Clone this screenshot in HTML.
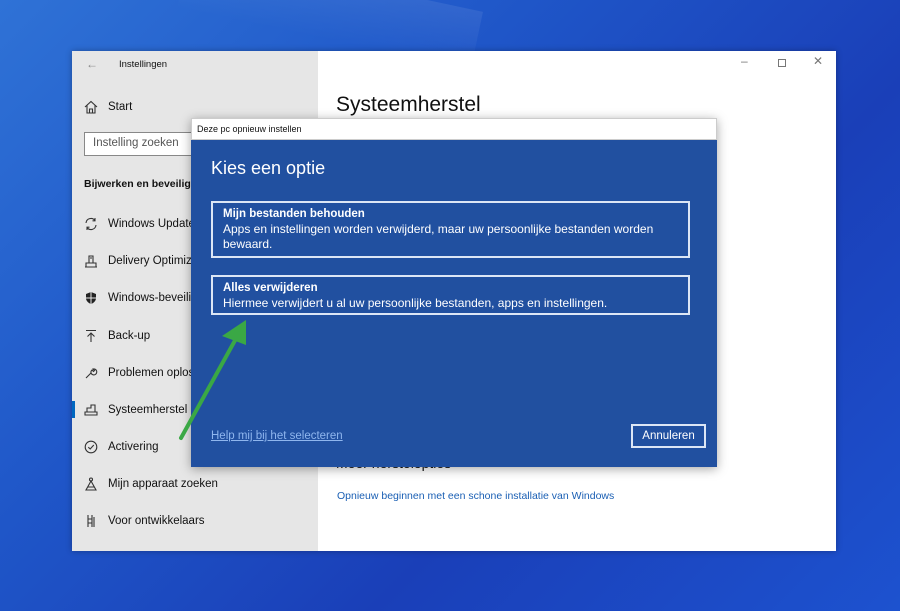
<!DOCTYPE html>
<html><head><meta charset="utf-8"><style>
*{margin:0;padding:0;box-sizing:border-box}
body{width:900px;height:611px;overflow:hidden;font-family:"Liberation Sans",sans-serif;position:relative;
background:linear-gradient(135deg,#2f72d6 0%,#1f56c8 35%,#1a3fb8 65%,#1d52cf 100%)}
.streak{position:absolute;left:180px;top:-20px;width:300px;height:60px;background:linear-gradient(180deg,rgba(255,255,255,0.08),rgba(255,255,255,0));transform:rotate(12deg)}
.win{position:absolute;left:72px;top:51px;width:764px;height:500px;background:#fff;box-shadow:0 0 6px rgba(0,0,0,.3)}
.side{position:absolute;left:0;top:0;width:246px;height:500px;background:#e6e6e6}
.t{position:absolute;font-size:11.5px;color:#111;white-space:nowrap}
.ic{position:absolute;left:12px;width:14px;height:14px}
.dlg{position:absolute;left:191px;top:118px;width:526px;height:349px;background:#2150a0;box-shadow:0 2px 10px rgba(0,0,0,.35)}
.dt{position:absolute;left:0;top:0;width:526px;height:22px;background:#fff;border:1px solid #ccc;font-size:9px;color:#111;padding:5px 5px}
.opt{position:absolute;left:20px;width:479px;border:2px solid #dce6f5;color:#fff;padding:4px 10px}
.opt b{font-size:11.5px;display:block;line-height:15px}
.opt span{font-size:12px;line-height:15px;display:block}
</style></head><body>
<div class="streak"></div>
<div class="win">
 <div class="side">
  <div class="t" style="left:14px;top:6px;color:#888;font-size:12px">←</div>
  <div class="t" style="left:47px;top:8px;font-size:9.5px">Instellingen</div>
  <svg class="ic" style="top:49px" viewBox="0 0 14 14" fill="none" stroke="#333" stroke-width="1.1"><path d="M1 7L7 1.5 13 7M3 5.5V13H11V5.5M5.5 13V9H8.5V13"/></svg>
  <div class="t" style="left:36px;top:50px">Start</div>
  <div style="position:absolute;left:12px;top:81px;width:120px;height:24px;border:1px solid #888;background:#fff"></div>
  <div class="t" style="left:21px;top:86px;color:#555">Instelling zoeken</div>
  <div class="t" style="left:12px;top:127px;font-weight:bold;font-size:10.5px">Bijwerken en beveiliging</div>
  <svg class="ic" style="top:166px" viewBox="0 0 14 14" fill="none" stroke="#333" stroke-width="1.1"><path d="M2 6A5 5 0 0 1 11 3.5M12 8A5 5 0 0 1 3 10.5M11 1V3.8H8.5M3 13V10.2H5.5"/></svg>
  <div class="t" style="left:36px;top:167px">Windows Update</div>
  <svg class="ic" style="top:203px" viewBox="0 0 14 14" fill="none" stroke="#333" stroke-width="1.1"><path d="M1 13H13M2 13V9H12V13M5 9V2H9V9M6 4H8"/></svg>
  <div class="t" style="left:36px;top:204px">Delivery Optimization</div>
  <svg class="ic" style="top:240px" viewBox="0 0 14 14"><path d="M7 1L12 3V7C12 10 9.5 12 7 13 4.5 12 2 10 2 7V3Z" fill="#222"/><path d="M7 1V13M2 7H12" stroke="#e6e6e6" stroke-width="1"/></svg>
  <div class="t" style="left:36px;top:241px">Windows-beveiliging</div>
  <svg class="ic" style="top:278px" viewBox="0 0 14 14" fill="none" stroke="#333" stroke-width="1.1"><path d="M2 1.5H12M7 13V4M3.5 7.5L7 4 10.5 7.5"/></svg>
  <div class="t" style="left:36px;top:279px">Back-up</div>
  <svg class="ic" style="top:315px" viewBox="0 0 14 14" fill="none" stroke="#333" stroke-width="1.1"><path d="M2 12L7 7M7 7A3 3 0 1 0 9 3L10.5 4.5 9.5 5.5 8 4A3 3 0 0 0 7 7Z"/></svg>
  <div class="t" style="left:36px;top:316px">Problemen oplossen</div>
  <div style="position:absolute;left:0;top:350px;width:3px;height:17px;background:#0067c0"></div>
  <svg class="ic" style="top:352px" viewBox="0 0 14 14" fill="none" stroke="#333" stroke-width="1.1"><path d="M1 12H13V9H1ZM3 9V5H7V2H11V9"/></svg>
  <div class="t" style="left:36px;top:353px">Systeemherstel</div>
  <svg class="ic" style="top:389px" viewBox="0 0 14 14" fill="none" stroke="#333" stroke-width="1.1"><circle cx="7" cy="7" r="5.8"/><path d="M4.3 7.2L6.2 9 9.8 5"/></svg>
  <div class="t" style="left:36px;top:390px">Activering</div>
  <svg class="ic" style="top:426px" viewBox="0 0 14 14" fill="none" stroke="#333" stroke-width="1.1"><circle cx="7" cy="2.5" r="1.5"/><path d="M7 4L2 13H12ZM4 10H10"/></svg>
  <div class="t" style="left:36px;top:427px">Mijn apparaat zoeken</div>
  <svg class="ic" style="top:463px" viewBox="0 0 14 14" fill="none" stroke="#333" stroke-width="1.1"><path d="M4 1V13M8 1V13M4 5H8M4 9H8M10 3V13"/></svg>
  <div class="t" style="left:36px;top:464px">Voor ontwikkelaars</div>
 </div>
 <div class="t" style="left:669px;top:3px;color:#777;font-size:12px">–</div>
 <div style="position:absolute;left:706px;top:8px;width:8px;height:8px;border:1px solid #777"></div>
 <div class="t" style="left:741px;top:3px;color:#777;font-size:12px">✕</div>
 <div class="t" style="left:264px;top:42px;font-size:21px;color:#111">Systeemherstel</div>
 <div class="t" style="left:264px;top:404px;font-size:14px;color:#111">Meer herstelopties</div>
 <div class="t" style="left:265px;top:439px;font-size:10.5px;color:#1a5fb4">Opnieuw beginnen met een schone installatie van Windows</div>
</div>
<div class="dlg">
 <div class="dt">Deze pc opnieuw instellen</div>
 <div class="t" style="left:20px;top:40px;font-size:18px;color:#fff">Kies een optie</div>
 <div class="opt" style="top:83px;height:57px"><b>Mijn bestanden behouden</b><span>Apps en instellingen worden verwijderd, maar uw persoonlijke bestanden worden bewaard.</span></div>
 <div class="opt" style="top:157px;height:40px"><b>Alles verwijderen</b><span>Hiermee verwijdert u al uw persoonlijke bestanden, apps en instellingen.</span></div>
 <div class="t" style="left:20px;top:312px;color:#8fb6ee;text-decoration:underline">Help mij bij het selecteren</div>
 <div style="position:absolute;left:440px;top:306px;width:75px;height:24px;border:2px solid #dce6f5;color:#fff;font-size:11.5px;text-align:center;line-height:20px">Annuleren</div>
</div>
<svg style="position:absolute;left:0;top:0" width="900" height="611"><path d="M181 438L238 335" stroke="#3aa845" stroke-width="4" stroke-linecap="round"/><path d="M246 320L222 336 246 345Z" fill="#3aa845"/></svg>
</body></html>
